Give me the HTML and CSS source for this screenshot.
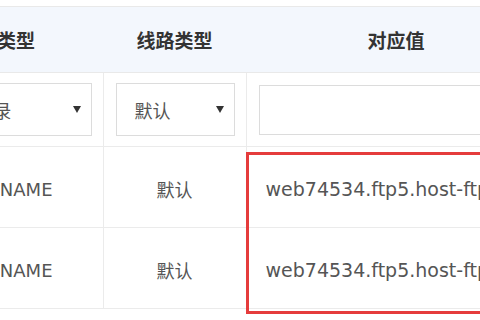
FILE: index.html
```html
<!DOCTYPE html>
<html>
<head>
	<title>解析记录</title>
	<meta charset="utf-8">
	<link rel="stylesheet" href="styles.css">
</head>
<body>
	<div class="wrap">
		<table class="dns">
			<thead>
				<tr>
					<th class="c-type">记录类型</th>
					<th class="c-line">线路类型</th>
					<th class="c-value">对应值</th>
				</tr>
			</thead>
			<tbody>
				<tr class="edit">
					<td class="c-type"><div class="sel sel-type"><span>CNAME记录</span><i class="arrow"></i></div></td>
					<td class="c-line"><div class="sel"><span>默认</span><i class="arrow"></i></div></td>
					<td class="c-value"><div class="ipt"></div></td>
				</tr>
				<tr>
					<td class="c-type">CNAME</td>
					<td class="c-line">默认</td>
					<td class="c-value">web74534.ftp5.host-ftp.com</td>
				</tr>
				<tr>
					<td class="c-type">CNAME</td>
					<td class="c-line">默认</td>
					<td class="c-value">web74534.ftp5.host-ftp.com</td>
				</tr>
			</tbody>
		</table>
		<!-- 标注框 -->
		<div class="mark"></div>
	</div>
</body>
</html>
```

FILE: styles.css
```css
*{margin: 0;padding: 0;box-sizing: border-box;}
html,body{width: 100%;height: 100%;overflow: hidden;background: #fff;}
body{padding-top: 6px;font-family: "DejaVu Sans","Noto Sans CJK SC",sans-serif;color: #555;}
.wrap{position: relative;}
.dns{border-collapse: collapse;table-layout: fixed;width: 671px;margin-left: -125px;border-top: 1px solid #e9e9e9;}
.dns th{height: 66px;background: #f3f7fd;color: #333;font-size: 19px;font-weight: bold;border-bottom: 1px solid #e9e9e9;}
.dns td{height: 81px;padding-top: 4px;font-size: 18px;text-align: center;border-bottom: 1px solid #ebebeb;border-left: 1px solid #ebebeb;}
.dns td:first-child{border-left: none;}
.dns .c-type{width: 228px;text-align: right;}
.dns th.c-type{padding-right: 68px;}
.dns td.c-type{padding-right: 50px;}
.dns .c-line{width: 143px;}
.dns .c-value{width: 300px;}
.dns td.c-value{text-align: left;padding-left: 19px;font-size: 19px;white-space: nowrap;overflow: hidden;}
.dns .edit td{height: 74px;padding: 0 11px 0 12px;}
.sel{position: relative;height: 53px;border: 1px solid #dcdcdc;text-align: left;padding: 4px 0 0 18px;line-height: 47px;font-size: 18px;}
.sel-type{padding-left: 22px;}
.arrow{position: absolute;right: 10px;top: 22px;width: 0;height: 0;border-left: 4px solid transparent;border-right: 4px solid transparent;border-top: 7px solid #333;}
.ipt{height: 50px;border: 1px solid #dcdcdc;}
.mark{position: absolute;left: 246px;top: 146px;width: 300px;height: 162px;border: 3px solid #e53c3c;}
```
